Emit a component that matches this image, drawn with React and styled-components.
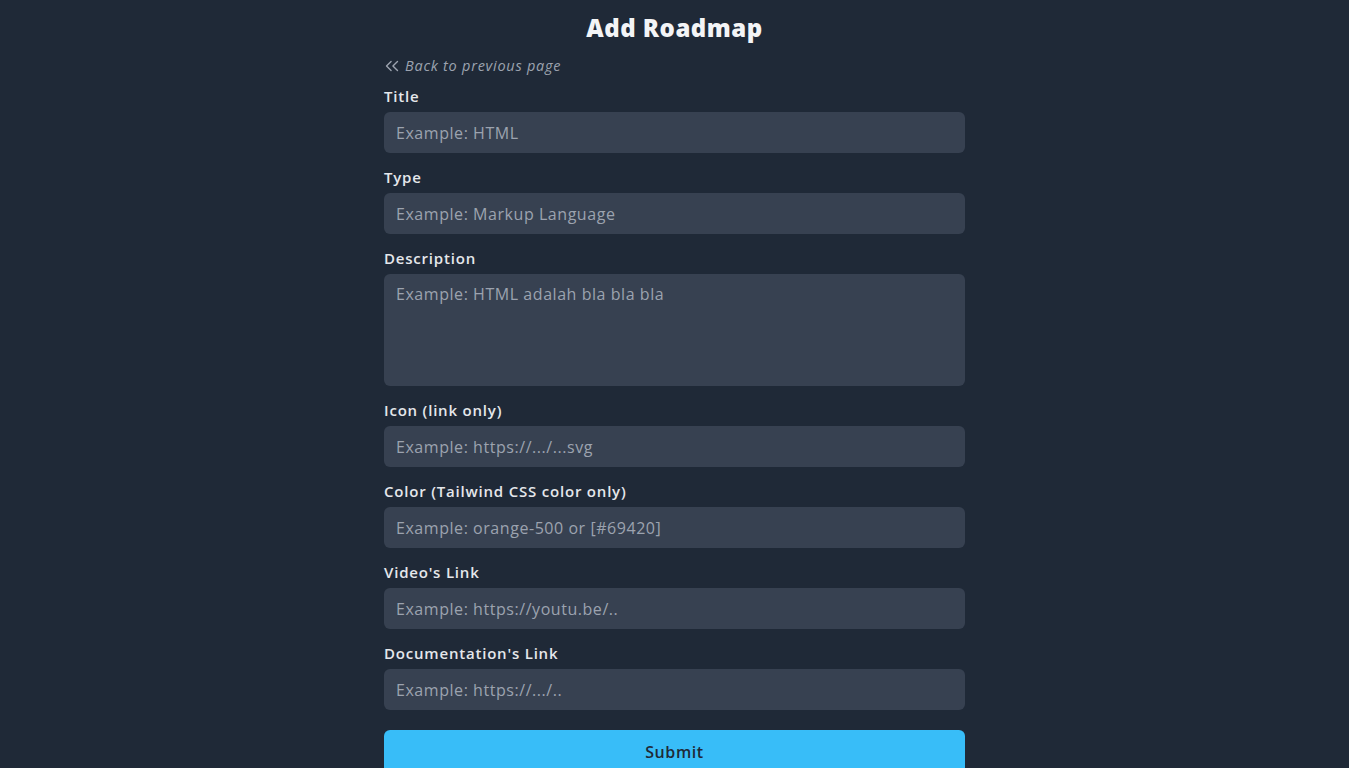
import React from 'react'
import styled, { createGlobalStyle } from 'styled-components'
import { ChevronsLeft } from 'lucide-react'

const GlobalStyle = createGlobalStyle`
    html, body {
        margin:0;
        padding:0;
        background-color:#1f2937;
    }
    body {
        font-family:'Open Sans', 'Liberation Sans', sans-serif;
        color:#e5e7eb;
    }
    * {
        box-sizing:border-box;
    }
`

const PageStyle = styled.div`
    min-height:100vh;
    display:flex;
    justify-content:center;
    padding-top:12px;
`

const FormStyle = styled.form`
    width:581px;
    display:flex;
    flex-direction:column;
`

const HeadingStyle = styled.h1`
    margin:0;
    font-size:24px;
    line-height:32px;
    font-weight:800;
    letter-spacing:0.5px;
    text-align:center;
    color:#f3f4f6;
`

const BackLinkStyle = styled.a`
    margin-top:12px;
    margin-bottom:8px;
    height:20px;
    display:flex;
    align-items:center;
    gap:2px;
    font-size:14.5px;
    line-height:20px;
    font-style:italic;
    letter-spacing:0.75px;
    color:#9ca3af;
    text-decoration:none;
    cursor:pointer;
    svg {
        margin-left:-3px;
        flex-shrink:0;
    }
`

const FieldStyle = styled.div`
    display:flex;
    flex-direction:column;
    gap:4px;
    margin-bottom:12px;
`

const LabelStyle = styled.label`
    font-size:15px;
    line-height:24px;
    font-weight:600;
    letter-spacing:0.8px;
    color:#e5e7eb;
`

const InputStyle = styled.input`
    height:41px;
    width:100%;
    padding:0 12px;
    border:none;
    border-radius:6px;
    background-color:#374151;
    color:#e5e7eb;
    font-family:inherit;
    font-size:16px;
    letter-spacing:0.55px;
    outline:none;
    &::placeholder {
        color:#9ca3af;
    }
`

const TextareaStyle = styled.textarea`
    height:112px;
    width:100%;
    padding:9px 12px;
    border:none;
    border-radius:6px;
    background-color:#374151;
    color:#e5e7eb;
    font-family:inherit;
    font-size:16px;
    letter-spacing:0.55px;
    line-height:22px;
    resize:none;
    outline:none;
    &::placeholder {
        color:#9ca3af;
    }
`

const SubmitStyle = styled.button`
    margin-top:8px;
    height:44px;
    width:100%;
    border:none;
    border-radius:6px;
    background-color:#38bdf8;
    color:#1f2937;
    font-family:inherit;
    font-size:16px;
    font-weight:600;
    letter-spacing:0.6px;
    cursor:pointer;
`

const fields = [
    { name: 'title', label: 'Title', placeholder: 'Example: HTML' },
    { name: 'type', label: 'Type', placeholder: 'Example: Markup Language' },
    { name: 'description', label: 'Description', placeholder: 'Example: HTML adalah bla bla bla', multiline: true },
    { name: 'icon', label: 'Icon (link only)', placeholder: 'Example: https://.../...svg' },
    { name: 'color', label: 'Color (Tailwind CSS color only)', placeholder: 'Example: orange-500 or [#69420]' },
    { name: 'video', label: "Video's Link", placeholder: 'Example: https://youtu.be/..' },
    { name: 'docs', label: "Documentation's Link", placeholder: 'Example: https://.../..' },
]

const App = () => {
    return (
        <PageStyle>
            <GlobalStyle />
            <FormStyle onSubmit={e => e.preventDefault()}>
                <HeadingStyle>Add Roadmap</HeadingStyle>
                <BackLinkStyle>
                    <ChevronsLeft size={22} strokeWidth={1.5} />
                    Back to previous page
                </BackLinkStyle>
                {fields.map(f => (
                    <FieldStyle key={f.name}>
                        <LabelStyle htmlFor={f.name}>{f.label}</LabelStyle>
                        {f.multiline
                            ? <TextareaStyle id={f.name} placeholder={f.placeholder} />
                            : <InputStyle id={f.name} placeholder={f.placeholder} />
                        }
                    </FieldStyle>
                ))}
                <SubmitStyle type='submit'>Submit</SubmitStyle>
            </FormStyle>
        </PageStyle>
    )
}

export default App
